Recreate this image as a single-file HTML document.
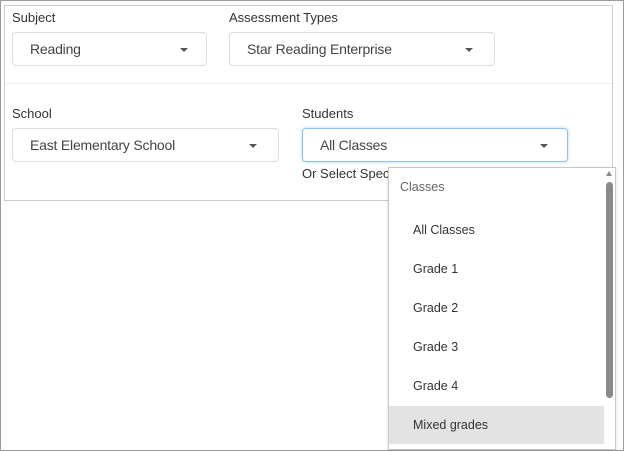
<!DOCTYPE html><html><head><style>
*{box-sizing:border-box;margin:0;padding:0}
body{width:624px;height:451px;background:#fff;font-family:"Liberation Sans",sans-serif;color:#333;position:relative;overflow:hidden}
.abs{position:absolute}
.frame{left:0;top:0;width:624px;height:451px;border:1px solid #9a9a9a}
.panel{left:4px;top:5px;width:609px;height:196px;border:1px solid #ccc}
.lbl{font-size:13px;color:#333}
.sel{border:1px solid #ddd;border-radius:4px;font-size:14px;letter-spacing:-0.2px;color:#444;padding-left:17px;display:flex;align-items:center;background:#fff}
.arr{position:absolute;right:18px;top:15px;width:0;height:0;border-left:4px solid transparent;border-right:4px solid transparent;border-top:4px solid #555}
.dd{left:388px;top:167px;width:228px;height:283px;border:1px solid #c8c8c8;background:#fff;box-shadow:0 1px 3px rgba(0,0,0,.15)}
.it{position:absolute;left:24px;font-size:12.5px;color:#333}
</style></head><body>
<div class="abs frame"></div>
<div class="abs panel"></div>
<div class="abs" style="left:5px;top:83px;width:607px;height:1px;background:#eee"></div>
<div class="abs lbl" style="left:12px;top:10px">Subject</div>
<div class="abs lbl" style="left:229px;top:10px">Assessment Types</div>
<div class="abs sel" style="left:12px;top:32px;width:195px;height:34px">Reading<span class="arr"></span></div>
<div class="abs sel" style="left:229px;top:32px;width:266px;height:34px">Star Reading Enterprise<span class="arr" style="right:21px"></span></div>
<div class="abs lbl" style="left:12px;top:106px">School</div>
<div class="abs lbl" style="left:302px;top:106px">Students</div>
<div class="abs sel" style="left:12px;top:128px;width:267px;height:34px">East Elementary School<span class="arr" style="right:21px"></span></div>
<div class="abs sel" style="left:302px;top:128px;width:266px;height:34px;border-color:#8fc4ea;box-shadow:0 0 3px rgba(100,170,230,.5)">All Classes<span class="arr" style="right:19px"></span></div>
<div class="abs lbl" style="left:302px;top:166px">Or Select Specific</div>
<div class="abs dd">
<div class="it" style="left:11px;top:12px;color:#666">Classes</div>
<div class="it" style="top:55px">All Classes</div>
<div class="it" style="top:94px">Grade 1</div>
<div class="it" style="top:133px">Grade 2</div>
<div class="it" style="top:172px">Grade 3</div>
<div class="it" style="top:211px">Grade 4</div>
<div class="abs" style="left:0;top:238px;width:215px;height:38px;background:#e3e3e3"></div>
<div class="it" style="top:250px">Mixed grades</div>
<div class="abs" style="left:217px;top:3px;width:0;height:0;border-left:3px solid transparent;border-right:3px solid transparent;border-bottom:5px solid #888"></div>
<div class="abs" style="left:217px;top:14px;width:7px;height:216px;border-radius:4px;background:#8a8a8a"></div>
</div>
</body></html>
